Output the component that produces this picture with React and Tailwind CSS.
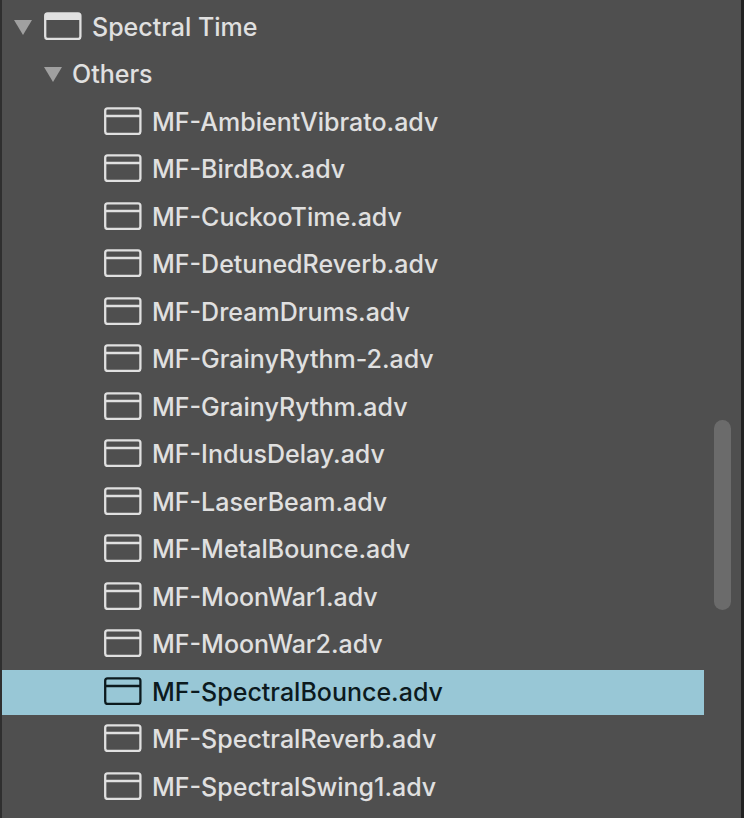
import React from 'react';

const presets = [
    'MF-AmbientVibrato.adv',
    'MF-BirdBox.adv',
    'MF-CuckooTime.adv',
    'MF-DetunedReverb.adv',
    'MF-DreamDrums.adv',
    'MF-GrainyRythm-2.adv',
    'MF-GrainyRythm.adv',
    'MF-IndusDelay.adv',
    'MF-LaserBeam.adv',
    'MF-MetalBounce.adv',
    'MF-MoonWar1.adv',
    'MF-MoonWar2.adv',
    'MF-SpectralBounce.adv',
    'MF-SpectralReverb.adv',
    'MF-SpectralSwing1.adv',
];

const Arrow = ({ isOpen }) => (
    <svg
        viewBox="0 0 18 20"
        className={`h-5 w-[18px] shrink-0 ${isOpen ? '' : '-rotate-90'}`}
        aria-hidden="true"
    >
        <path d="M0 4H18L9 19Z" fill="#a0a0a0" />
    </svg>
);

// The device itself has a filled title bar, its presets only a line
const DeviceIcon = ({ filled = false }) => (
    <svg viewBox="0 0 38 28" className="h-7 w-[38px] shrink-0" fill="none" stroke="currentColor" strokeWidth="2.3" aria-hidden="true">
        <rect x="1.2" y="1.4" width="35.2" height="25.6" rx="2.4" />
        {filled
            ? <path d="M1.5 5H36.2" strokeWidth="6" />
            : <path d="M1 9H37" />}
    </svg>
);

const rowClasses = 'flex h-[45px] w-full items-center pb-[3px] text-left whitespace-nowrap';

export default function App() {
    const [selected, setSelected] = React.useState('MF-SpectralBounce.adv');
    const [openMenus, setOpenMenus] = React.useState({ device: true, others: true });

    const toggleMenu = (menu) => {
        setOpenMenus(prev => ({ ...prev, [menu]: !prev[menu] }));
    };

    return (
        <main className="flex min-h-screen border-l-2 border-r-3 border-l-[#2f2f2f] border-r-[#222222] bg-[#4f4f4f] font-[Inter,sans-serif] text-[25px] leading-8 font-medium text-[#e0e0e0]">
            <div className="min-w-0 flex-1 pt-[5px]">
                <button
                    onClick={() => toggleMenu('device')}
                    aria-expanded={openMenus.device}
                    className={`${rowClasses} mb-[2px] gap-3 pl-3`}
                >
                    <Arrow isOpen={openMenus.device} />
                    <span className="flex items-center gap-2.5">
                        <DeviceIcon filled />
                        <span className="pt-0.5">Spectral Time</span>
                    </span>
                </button>

                {openMenus.device && (
                    <button
                        onClick={() => toggleMenu('others')}
                        aria-expanded={openMenus.others}
                        className={`${rowClasses} mb-[3px] gap-2.5 pl-[42px]`}
                    >
                        <Arrow isOpen={openMenus.others} />
                        <span className="pt-0.5">Others</span>
                    </button>
                )}

                {openMenus.device && openMenus.others && (
                    <ul>
                        {presets.map(preset => (
                            <li key={preset} className="odd:mb-[2px] even:mb-[3px]">
                                <button
                                    onClick={() => setSelected(preset)}
                                    aria-pressed={selected === preset}
                                    className={`${rowClasses} gap-2.5 pl-[102px] ${selected === preset ? 'bg-[#98c7d6] text-[#0c1a1e]' : ''}`}
                                >
                                    <DeviceIcon />
                                    <span className="pt-0.5">{preset}</span>
                                </button>
                            </li>
                        ))}
                    </ul>
                )}
            </div>

            {/* Scroll track */}
            <div className="w-[37px] shrink-0 pt-[420px] pl-2.5">
                <div className="h-[190px] w-[17px] rounded-full bg-[#6b6b6b]"></div>
            </div>
        </main>
    );
}
